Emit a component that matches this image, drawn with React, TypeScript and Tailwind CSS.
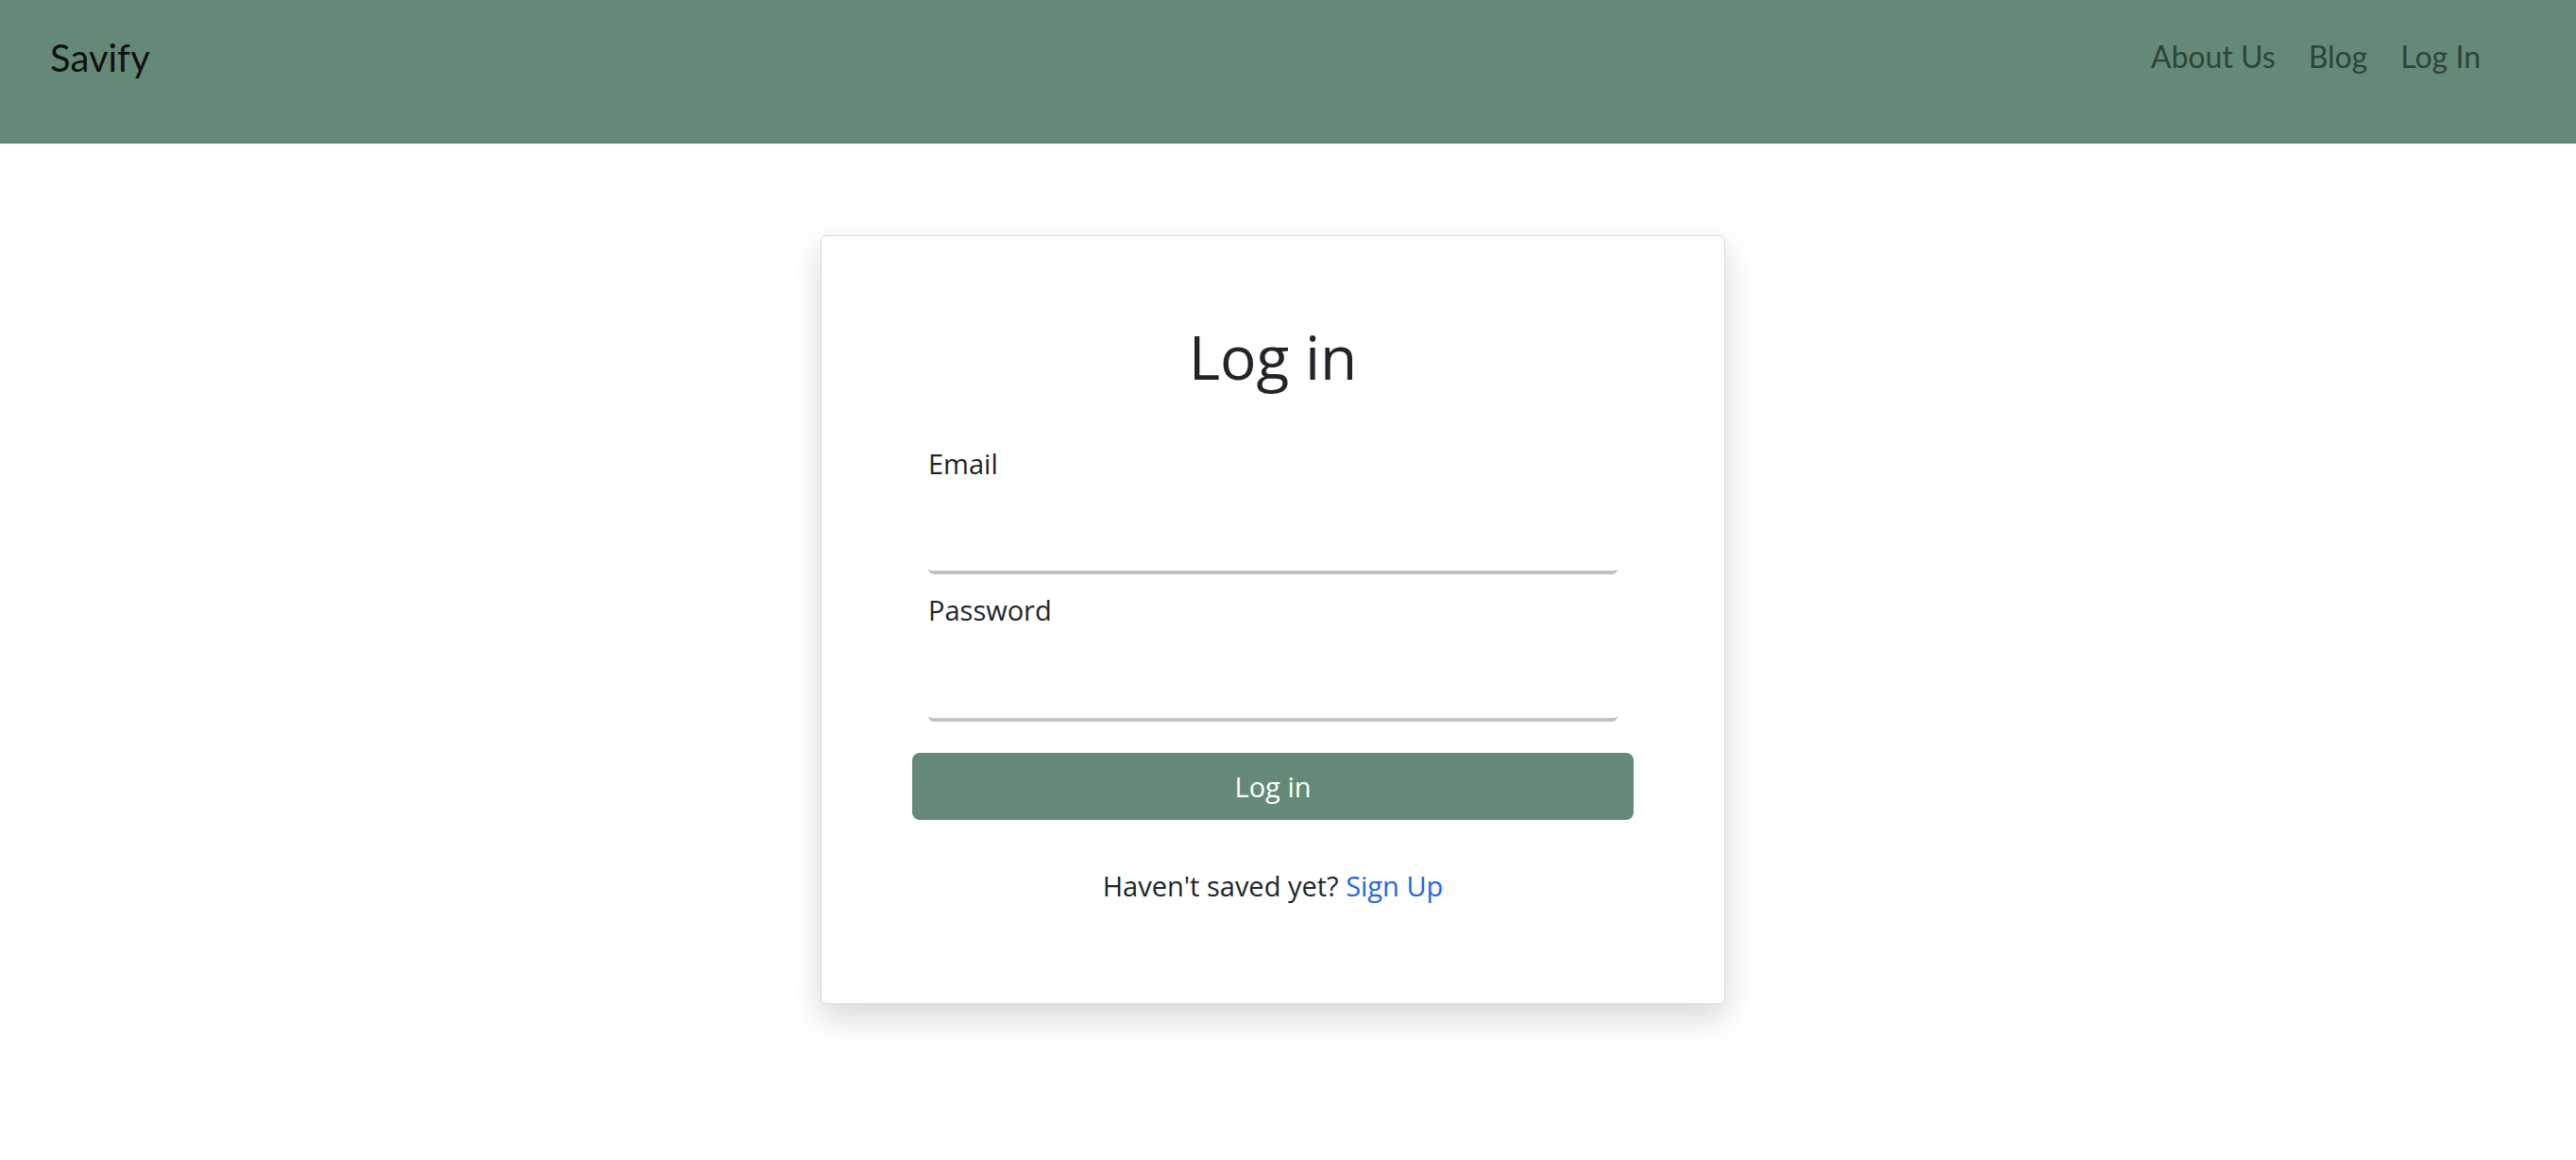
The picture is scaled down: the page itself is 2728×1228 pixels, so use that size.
export default function App() {
    return (
        <div className="min-h-screen bg-white font-['Lato','Open_Sans',sans-serif] text-[#212529]">
            <header className="h-[152px] bg-[#648a77] flex items-start justify-between pl-[53px] pr-[101px] pt-[41px]">
                <a href="#" className="text-[40px] leading-none text-[#111111]">
                    Savify
                </a>
                <nav className="flex items-center gap-[35px] mt-[3px] text-[32px] leading-none text-[#2d4438]">
                    <a href="#">About Us</a>
                    <a href="#">Blog</a>
                    <a href="#">Log In</a>
                </nav>
            </header>

            <main className="flex justify-center pt-[97px] pr-[32px]">
                <div className="w-[958px] h-[814px] bg-white border border-[#dadada] rounded-[6px] shadow-[0_14px_34px_rgba(0,0,0,0.16)] pt-[90px] px-[96px] font-['Open_Sans','Lato',sans-serif]">
                    <h1 className="text-center text-[64px] leading-[1.2] text-[#212529]">Log in</h1>

                    <form className="mt-[52px]" onSubmit={(e) => e.preventDefault()}>
                        <div className="px-[17px]">
                            <label className="block text-[29px] leading-[1.5]">Email</label>
                            <input
                                type="email"
                                className="block w-full h-[96px] outline-none border-0 border-b-4 border-[#c2c2c2] rounded-[6px] text-[29px]"
                            />
                            <label className="block mt-[16px] text-[29px] leading-[1.5]">Password</label>
                            <input
                                type="password"
                                className="block w-full h-[96px] outline-none border-0 border-b-4 border-[#c2c2c2] rounded-[6px] text-[29px]"
                            />
                        </div>
                        <button
                            type="submit"
                            className="mt-[33px] w-full h-[71px] rounded-[8px] bg-[#648a77] text-white text-[29px]"
                        >
                            Log in
                        </button>
                    </form>

                    <p className="mt-[48px] text-center text-[29px] leading-[1.5]">
                        Haven't saved yet? <a href="#" className="text-[#2563f0]">Sign Up</a>
                    </p>
                </div>
            </main>
        </div>
    );
}
